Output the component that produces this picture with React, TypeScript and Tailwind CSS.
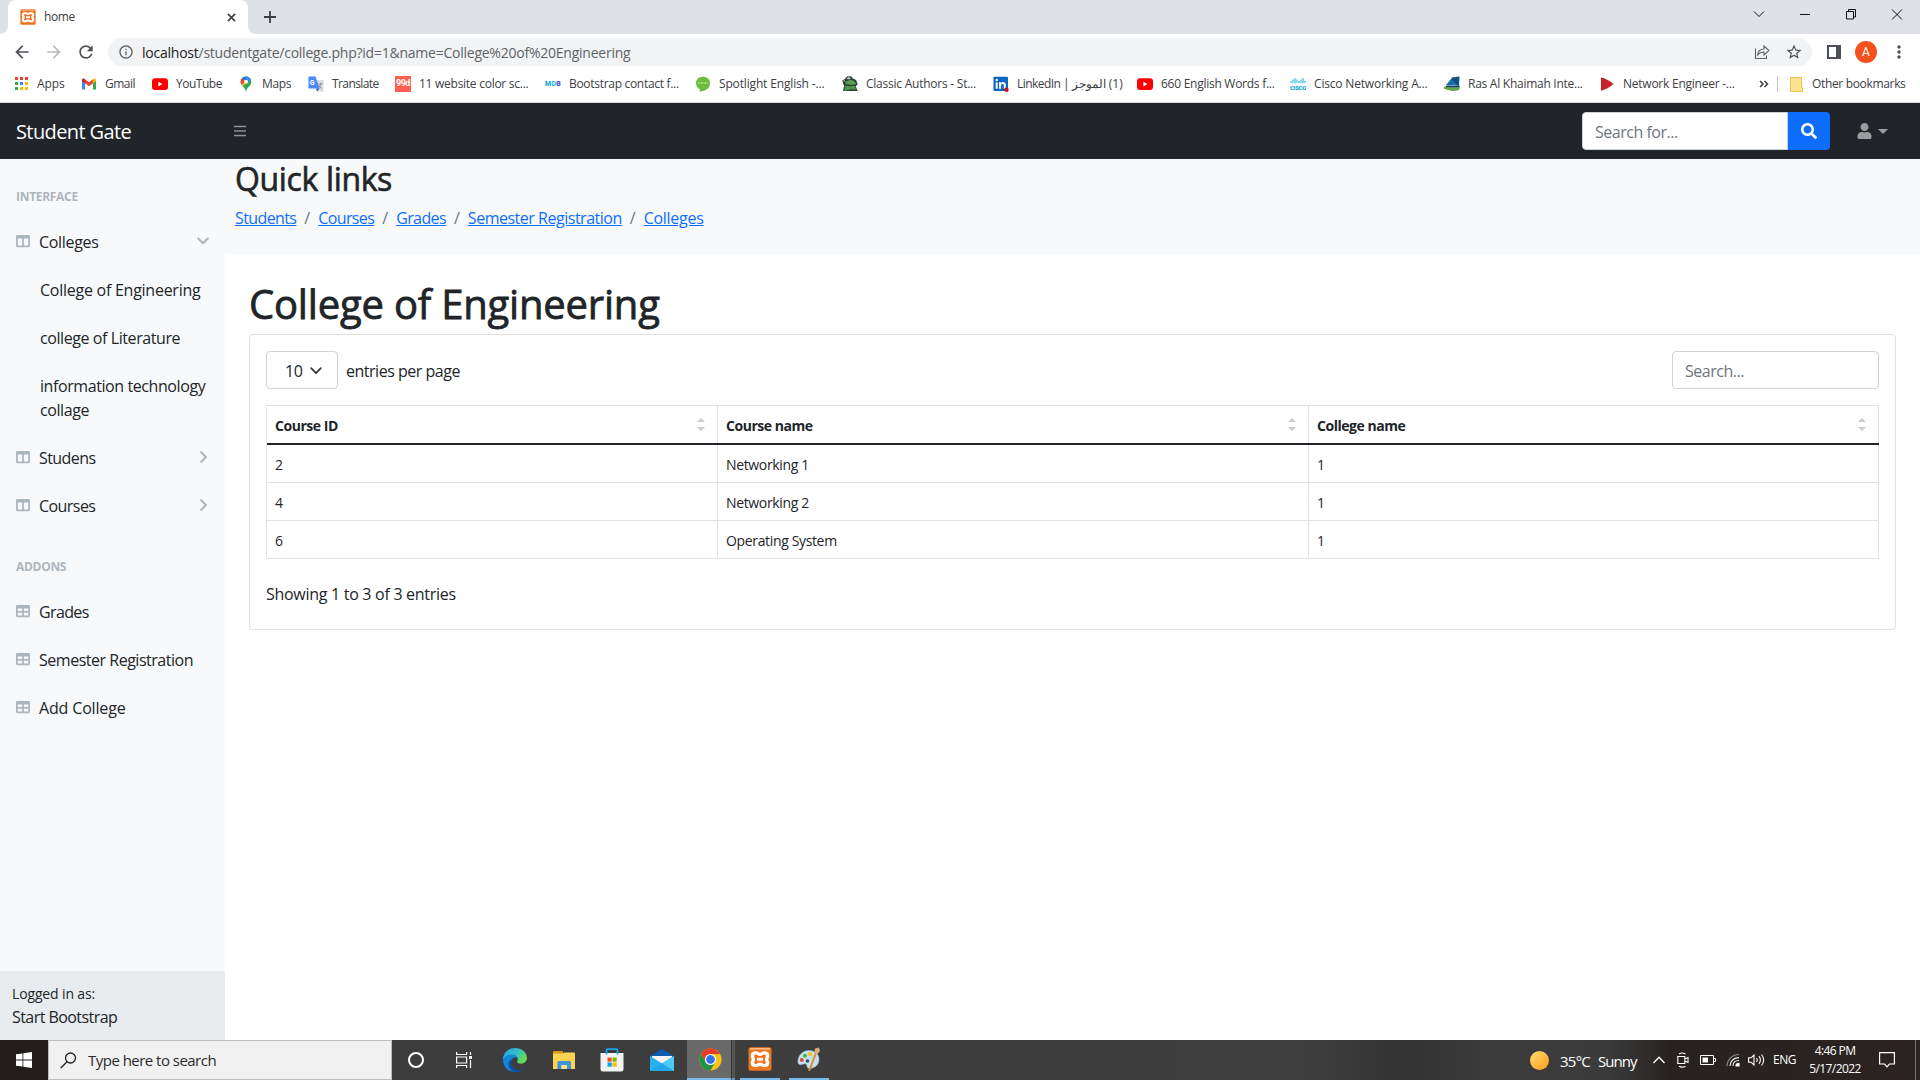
import React from "react";
import { FaColumns, FaTable, FaUser, FaSearch } from "react-icons/fa";
import { MdRefresh, MdArrowBack, MdArrowForward, MdInfoOutline, MdStarBorder, MdMoreVert } from "react-icons/md";

const YouTubeIcon = () => (
  <svg viewBox="0 0 16 16" className="size-4">
    <rect x="0" y="2.3" width="16" height="11.6" rx="3" fill="#f00" />
    <path d="M6.4 5.8 10.4 8.1 6.4 10.4z" fill="#fff" />
  </svg>
);

const XamppIcon = ({ className }: { className: string }) => (
  <svg viewBox="0 0 24 24" className={className}>
    <rect x="0.5" y="0.3" width="23" height="23.4" rx="2" fill="#ee7420" />
    <rect x="2" y="1" width="20" height="1.6" fill="#f7b98a" />
    <g transform="translate(12 12.3) scale(1.14 1.06) translate(-12 -12.2)" fill="none" stroke="#fff">
      <path
        d="M8.3 6.2c2 0 2.2 1.500 3.700 1.500s1.700-1.500 3.700-1.500 3 1.300 3 2.900c0 1.700-1 2-1 3.100s1 1.400 1 3.100c0 1.600-1 2.900-3 2.900s-2.200-1.500-3.700-1.500-1.700 1.500-3.700 1.500-3-1.300-3-2.900c0-1.700 1-2 1-3.100s-1-1.400-1-3.100c0-1.600 1-2.900 3-2.900z"
        strokeWidth="3"
      />
      <path d="M9.500 12.200h5" strokeWidth="2.800" />
    </g>
  </svg>
);

const AppsIcon = () => (
  <svg viewBox="0 0 16 16" className="size-4">
    {["#ea4335", "#ea4335", "#ea4335", "#34a853", "#4285f4", "#fbbc04", "#34a853", "#fbbc04", "#fbbc04"].map((c, i) => (
      <rect key={i} x={2 + (i % 3) * 5} y={1 + Math.floor(i / 3) * 5} width="3" height="3" fill={c} />
    ))}
  </svg>
);

const GmailIcon = () => (
  <svg viewBox="0 0 16 16" className="size-4">
    <path d="M1 4v9.500h3V7z" fill="#4285f4" />
    <path d="M15 4v9.500h-3V7z" fill="#34a853" />
    <path d="M4 3.200 8 6.300l4-3.100v4L8 10.300 4 7.200z" fill="#ea4335" />
    <path d="M1 4c0-1.700 1.800-2 3-.8v4L1 5z" fill="#c5221f" />
    <path d="M15 4c0-1.700-1.800-2-3-.8v4L15 5z" fill="#fbbc04" />
  </svg>
);

const MapsIcon = () => (
  <svg viewBox="0 0 16 16" className="size-4">
    <path d="M8 .5a5.300 5.300 0 0 0-5.300 5.300C2.700 9.800 7 11 8 15.800 9 11 13.300 9.800 13.300 5.800A5.300 5.300 0 0 0 8 .5z" fill="#34a853" />
    <path d="M8 .5a5.300 5.300 0 0 0-4 1.800L8 5.800 11.700 2A5.300 5.300 0 0 0 8 .5z" fill="#1a73e8" />
    <path d="M4 2.300a5.300 5.300 0 0 0-.4 6.300L8 5.800z" fill="#ea4335" />
    <path d="M3.600 8.600 5 10.300 10 4.500 8 5z" fill="#fbbc04" />
    <path d="M8 .5a5.300 5.300 0 0 1 5 3.500L9 7 8 4z" fill="#4285f4" />
    <circle cx="8" cy="5.800" r="2" fill="#fff" />
  </svg>
);

const TranslateIcon = () => (
  <svg viewBox="0 0 16 16" className="size-4">
    <path d="M6 4h9.500v11.500H9.500z" fill="#dadce0" />
    <path d="M10.500 8h4M12.500 7v1.200c-.2 2-1 3-2.200 4M11 9.500c.6 1.500 1.500 2.200 3 2.800" stroke="#7b8aa3" strokeWidth=".9" fill="none" />
    <path d="M8 12.500h3.500L9 15.500z" fill="#1c4fc0" />
    <path d="M.5.500h7L11.500 12.500H.5z" fill="#4a8af4" />
    <text x="1.700" y="9.200" fontSize="7" fontWeight="700" fill="#fff" fontFamily="Roboto">G</text>
  </svg>
);

const NinetyNineIcon = () => (
  <span className="flex size-4 items-center justify-center bg-[#fe5f50] font-[Roboto] text-[9px] font-bold tracking-[-0.5px] text-white">99d</span>
);

const MdbIcon = () => (
  <span className="flex w-4 justify-center font-[Roboto] text-[7px] leading-4 font-black tracking-[0.2px]">
    <span className="text-[#1ba8e0]">M</span>
    <span className="text-[#2bbbe8]">D</span>
    <span className="text-[#4d5cc5]">B</span>
  </span>
);

const SpotlightIcon = () => (
  <svg viewBox="0 0 16 16" className="size-4">
    <path d="M8 .7c4 0 7 2.800 7 6.300 0 4.800-3 7.500-10.500 8.700L5 13.200C2.500 12.200 1 10 1 7 1 3.500 4 .7 8 .7z" fill="#6cbd3c" />
    <path d="M3 7h10" stroke="#b9e29d" strokeWidth="1.600" strokeDasharray="1 .4" />
  </svg>
);

const FrogIcon = () => (
  <svg viewBox="0 0 16 16" className="size-4">
    <path d="M.3 4.500 3 3l2-2.500 4-.3 2 2.300 3 1.500 1.700 4-2 2.500 2 4.500H1L2.200 10 1 7z" fill="#2e3d33" />
    <path d="M3 5.500 6 5l2-1.500 4 1.500 2.500 3-4.500 1L4 8z" fill="#58a058" />
    <path d="M3 9.500 8 10.300l5-.5 1 4-5-.5L2.500 15z" fill="#4b9650" />
    <path d="M4.500 2.500 7 1l2 1.500-3 1zM1 5l2-1v1.500z" fill="#c8d0c8" />
  </svg>
);

const LinkedInIcon = () => (
  <svg viewBox="0 0 16 16" className="size-4">
    <rect x=".5" y=".8" width="14.500" height="14.200" rx="1" fill="#0a66c2" />
    <path d="M2.700 6.200h2v6.500h-2zM6 6.200h2v1c.8-1.600 4.800-1.900 4.800 1.800v3.700h-2V9.500c0-2.200-2.700-2-2.700 0v3.200H6z" fill="#fff" />
    <circle cx="3.700" cy="4" r="1.200" fill="#fff" />
    <circle cx="13.500" cy="13.700" r="2.200" fill="#cc1016" />
  </svg>
);

const CiscoIcon = () => (
  <svg viewBox="0 0 16 16" className="size-4">
    <path d="M1 5v2M3 3.500V7M5 2v5.500M7 3.500V7M9 5v2M11 3.500V7M13 2v5.500M15 5v2" stroke="#1bb0e0" strokeWidth="1" />
    <text x="0" y="14.200" fontSize="6" fontWeight="900" textLength="16" lengthAdjust="spacingAndGlyphs" fill="#049fd9" fontFamily="Roboto">CISCO</text>
  </svg>
);

const RasIcon = () => (
  <svg viewBox="0 0 16 16" className="size-4">
    <path d="M8 1.500 15.500.5 15 9.500 4 9z" fill="#0d4f86" />
    <path d="M7 3 2 9l12 .5z" fill="#1b6da8" />
    <path d="M0 11c5-1.500 10 2 15.500-.5v3C10 16.500 4 14 0 12.800z" fill="#5fa343" />
    <path d="M2 10.500c5-1 9 1.500 13.500-.5" stroke="#123f6b" strokeWidth="1.500" fill="none" />
  </svg>
);

const PlayIcon = () => (
  <svg viewBox="0 0 16 16" className="size-4">
    <path d="M2 1.500Q7 2 14.500 8 8 13.500 2 14.700z" fill="#c92228" />
  </svg>
);

const bookmarks: { label: React.ReactNode; icon: React.ReactNode; className: string }[] = [
  { label: "Apps", icon: <AppsIcon />, className: "w-[68px] tracking-[-0.01em]" },
  { label: "Gmail", icon: <GmailIcon />, className: "w-[71px] tracking-[-0.04em]" },
  { label: "YouTube", icon: <YouTubeIcon />, className: "w-[86px] tracking-[-0.04em]" },
  { label: "Maps", icon: <MapsIcon />, className: "w-[70px] tracking-[-0.03em]" },
  { label: "Translate", icon: <TranslateIcon />, className: "w-[87px] tracking-[-0.05em]" },
  { label: "11 website color sc...", icon: <NinetyNineIcon />, className: "w-[150px] tracking-[-0.022em]" },
  { label: "Bootstrap contact f...", icon: <MdbIcon />, className: "w-[150px] tracking-[-0.025em]" },
  { label: "Spotlight English -...", icon: <SpotlightIcon />, className: "w-[147px] tracking-[-0.013em]" },
  { label: "Classic Authors - St...", icon: <FrogIcon />, className: "w-[151px] tracking-[-0.02em]" },
  { label: <>LinkedIn | <bdi>الموجز</bdi> (1)</>, icon: <LinkedInIcon />, className: "w-[144px] tracking-[-0.045em]" },
  { label: "660 English Words f...", icon: <YouTubeIcon />, className: "w-[153px] tracking-[-0.022em]" },
  { label: "Cisco Networking A...", icon: <CiscoIcon />, className: "w-[154px] tracking-[-0.015em]" },
  { label: "Ras Al Khaimah Inte...", icon: <RasIcon />, className: "w-[155px] tracking-[-0.022em]" },
  { label: "Network Engineer -...", icon: <PlayIcon />, className: "w-[160px] tracking-[-0.02em]" },
];

function BrowserChrome() {
  return (
    <header className="h-[103px] shrink-0 border-b border-[#d4d6d9] bg-white text-[12px] text-[#3c4043]">
      <div className="flex h-[34px] bg-[#dee1e6]">
        <div className="flex w-2 items-end bg-white">
          <div className="h-full w-2 rounded-br-lg bg-[#dee1e6]" />
        </div>
        <div className="flex bg-[#dee1e6]">
          <div className="flex w-60 items-center rounded-t-lg bg-white pr-[11px] pl-3">
            <XamppIcon className="size-4" />
            <span className="ml-2 flex-1 tracking-[-0.03em]">home</span>
            <svg viewBox="0 0 10 10" className="mr-px size-[9px]" stroke="#3c4043" strokeWidth="1.800">
              <path d="M1 1 9 9M9 1 1 9" />
            </svg>
          </div>
        </div>
        <div className="flex w-2 bg-white">
          <div className="h-full w-2 rounded-bl-lg bg-[#dee1e6]" />
        </div>
        <svg viewBox="0 0 12 12" className="mt-[11px] ml-2 size-3" stroke="#3c4043" strokeWidth="1.800">
          <path d="M6 0v12M0 6h12" />
        </svg>
        <svg viewBox="0 0 167 14" className="mt-[7px] ml-auto h-[14px] w-[167px]" fill="none" stroke="#111" strokeWidth="1">
          <path d="M1 4.500 6 9.500 11 4.500M47 7.500h10M93.500 4.500h7v7.500h-7zM95.500 4.500v-2h7v7.500h-2M139 2.500l10 10M149 2.500l-10 10" />
        </svg>
      </div>

      <div className="flex h-9 items-center">
        <div className="flex w-[108px] items-center pl-[12px]">
          <MdArrowBack className="size-5 text-[#4d5156]" />
          <MdArrowForward className="ml-3 size-5 text-[#b9bbbe]" />
          <MdRefresh className="ml-3 size-5 text-[#4d5156]" />
        </div>
        <div className="flex h-7 w-[1704px] items-center rounded-full bg-[#f1f3f4] pr-[9px] pl-[10px]">
          <MdInfoOutline className="size-4 text-[#5f6368]" />
          <span className="ml-2 text-[14px] tracking-[-0.017em] text-[#5f6368]">
            <span className="text-[#202124]">localhost</span>/studentgate/college.php?id=1&amp;name=College%20of%20Engineering
          </span>
          <svg viewBox="0 0 16 16" className="mr-[15px] ml-auto size-4" fill="none" stroke="#5f6368" strokeWidth="1.100">
            <path d="M1.500 4.500v10h11v-3M3.500 11c.5-4 3-6 6.500-6V2l5 4.500-5 4.500V8C7 8 5 9 3.500 11z" />
          </svg>
          <MdStarBorder className="size-[18px] text-[#4d5156]" />
        </div>
        <svg viewBox="0 0 16 14" className="ml-[14px] h-[14px] w-4">
          <path d="M2 1h12v12H2z" fill="none" stroke="#4d5156" strokeWidth="2" />
          <path d="M10 1h5v12h-5z" fill="#4d5156" />
        </svg>
        <div className="ml-[13px] flex size-[22px] items-center justify-center rounded-full bg-[#f4511e] font-[Roboto] text-[12px] text-white">A</div>
        <MdMoreVert className="ml-[12px] size-[20px] text-[#4d5156]" />
      </div>

      <div className="flex h-7 items-center pl-[13px]">
        {bookmarks.map((b, i) => (
          <div key={i} className={`flex shrink-0 items-center gap-2 ${b.className}`}>
            {b.icon}
            <span className="text-[12px] whitespace-nowrap">{b.label}</span>
          </div>
        ))}
        <svg viewBox="0 0 10 8" className="h-2 w-[10px] shrink-0" fill="none" stroke="#3c4043" strokeWidth="1.500">
          <path d="M1 1 4 4 1 7M5.500 1 8.500 4 5.500 7" />
        </svg>
        <div className="ml-[8px] h-4 w-px shrink-0 bg-[#c4c7ca]" />
        <svg viewBox="0 0 13 15" className="ml-3 h-[15px] w-[13px] shrink-0">
          <path d="M.5.500h11v10h1v4H.5z" fill="#fde293" stroke="#e9c64a" />
        </svg>
        <span className="ml-[9px] text-[12px] tracking-[-0.028em] whitespace-nowrap">Other bookmarks</span>
      </div>
    </header>
  );
}

function NavBar() {
  return (
    <nav className="flex h-14 shrink-0 items-center bg-[#212529]">
      <span className="w-[234px] pt-0.5 pl-4 text-[20px] tracking-[-0.03em] text-white">Student Gate</span>
      <svg viewBox="0 0 12 12" className="size-3" stroke="#8f9193" strokeWidth="1.300">
        <path d="M0 1.500h12M0 6h12M0 10.500h12" />
      </svg>
      <div className="ml-auto flex h-[38px] w-[248px]">
        <div className="flex w-[206px] items-center rounded-l border border-[#ced4da] bg-white pt-px pl-3 text-[16px] tracking-[-0.03em] text-[#6c757d]">Search for...</div>
        <div className="flex flex-1 items-center justify-center rounded-r bg-[#0d6efd]">
          <FaSearch className="size-4 text-white" />
        </div>
      </div>
      <div className="ml-[27px] flex w-[63px] items-center">
        <FaUser className="h-4 w-[15px] text-[#9b9d9f]" />
        <div className="ml-[6px] border-x-[5px] border-t-[5px] border-x-transparent border-t-[#9b9d9f]" />
      </div>
    </nav>
  );
}

function SideHeading({ children }: { children: React.ReactNode }) {
  return <div className="px-4 pt-[29px] pb-[11px] text-[12px] leading-[18px] font-bold tracking-[-0.025em] text-[#adb5bd]">{children}</div>;
}

function SideLink({ label, kind, arrow, className }: { label: string; kind: "columns" | "table"; arrow?: "down" | "right"; className: string }) {
  const Icon = kind === "columns" ? FaColumns : FaTable;
  return (
    <div className={`flex h-12 items-center px-4 ${className}`}>
      <Icon className="size-[14px] text-[#adb5bd]" />
      <span className="ml-[9px] flex-1 pt-px">{label}</span>
      {arrow && (
        <svg viewBox="0 0 12 12" className="size-3" fill="none" stroke="#adb5bd" strokeWidth="2.100" strokeLinecap="round" strokeLinejoin="round">
          <path d={arrow === "down" ? "M1.200 3.500 6 8.300 10.800 3.500" : "M4.200 1.200 9 6 4.200 10.800"} />
        </svg>
      )}
    </div>
  );
}

function Sidebar() {
  return (
    <aside className="flex w-[225px] shrink-0 flex-col bg-[#f8f9fa] text-[16px] leading-6">
      <SideHeading>INTERFACE</SideHeading>
      <SideLink label="Colleges" kind="columns" arrow="down" className="tracking-[-0.02em]" />
      <div className="pl-10">
        <div className="pt-[13px] pb-[11px] tracking-[-0.016em]">College of Engineering</div>
        <div className="pt-[13px] pb-[11px] tracking-[-0.026em]">college of Literature</div>
        <div className="pt-[13px] pb-[11px] tracking-[-0.026em]">
          information technology
          <br />
          collage
        </div>
      </div>
      <SideLink label="Studens" kind="columns" arrow="right" className="tracking-[-0.035em]" />
      <SideLink label="Courses" kind="columns" arrow="right" className="tracking-[-0.035em]" />
      <SideHeading>ADDONS</SideHeading>
      <SideLink label="Grades" kind="table" className="tracking-[-0.04em]" />
      <SideLink label="Semester Registration" kind="table" className="tracking-[-0.03em]" />
      <SideLink label="Add College" kind="table" className="tracking-[-0.01em]" />
      <div className="mt-auto h-[69px] bg-[#e9ecef] p-3">
        <div className="text-[14px] leading-[21px] tracking-[-0.01em]">Logged in as:</div>
        <div className="pt-px tracking-[-0.035em]">Start Bootstrap</div>
      </div>
    </aside>
  );
}

const crumbs = [
  { label: "Students", className: "tracking-[-0.038em]" },
  { label: "Courses", className: "tracking-[-0.038em]" },
  { label: "Grades", className: "tracking-[-0.038em]" },
  { label: "Semester Registration", className: "tracking-[-0.03em]" },
  { label: "Colleges", className: "tracking-[-0.018em]" },
];
const headers = ["Course ID", "Course name", "College name"];
const rows = [
  ["2", "Networking 1", "1"],
  ["4", "Networking 2", "1"],
  ["6", "Operating System", "1"],
];

function Main() {
  return (
    <main className="flex-1">
      <div className="h-[95px] bg-[#f8f9fa] pt-px pl-[10px]">
        <h2 className="text-[32px] leading-[38px] font-medium tracking-[-0.011em] [-webkit-text-stroke:0.6px_#212529]">Quick links</h2>
        <div className="mt-2 flex text-[16px] leading-6">
          {crumbs.map((c, i) => (
            <React.Fragment key={c.label}>
              {i > 0 && <span className="px-2 text-[#6c757d]">/</span>}
              <a className={`text-[#0d6efd] underline ${c.className}`}>{c.label}</a>
            </React.Fragment>
          ))}
        </div>
      </div>
      <div className="px-6 pt-[26px]">
        <h1 className="text-[40px] leading-[48px] font-medium tracking-[-0.005em] [-webkit-text-stroke:0.8px_#212529]">College of Engineering</h1>
        <div className="mt-[6px] h-[296px] rounded border border-[#dfdfdf] p-4">
          <div className="flex h-[38px] items-center text-[16px] tracking-[-0.03em]">
            <div className="flex h-full w-[72px] items-center rounded border border-[#ced4da] pt-px pl-[18px]">
              10
              <svg viewBox="0 0 12 8" className="ml-2 h-2 w-3" fill="none" stroke="#343a40" strokeWidth="1.800" strokeLinecap="round" strokeLinejoin="round">
                <path d="M1.200 1.200 6 6.200 10.800 1.200" />
              </svg>
            </div>
            <span className="ml-2 pt-px">entries per page</span>
            <div className="ml-auto flex h-full w-[207px] items-center rounded border border-[#ced4da] pt-px pl-3 text-[#6c757d]">Search...</div>
          </div>
          <div className="mt-4 border-t border-l border-[#dee2e6] text-[14px]">
            <div className="grid h-[39px] grid-cols-[451px_591px_1fr] border-b-2 border-[#212529] font-bold tracking-[-0.033em]">
              {headers.map((h) => (
                <div key={h} className="flex items-center justify-between border-r border-[#dee2e6] pt-px pr-3 pl-2">
                  {h}
                  <svg viewBox="0 0 8 13" className="mb-px h-[13px] w-2" fill="#ccc">
                    <path d="M0 4 4 0l4 4zM0 9h8l-4 4z" />
                  </svg>
                </div>
              ))}
            </div>
            {rows.map((r) => (
              <div key={r[0]} className="grid h-[38px] grid-cols-[451px_591px_1fr] border-b border-[#dee2e6] tracking-[-0.025em]">
                {r.map((c, i) => (
                  <div key={i} className="flex items-center border-r border-[#dee2e6] pt-px pl-2">{c}</div>
                ))}
              </div>
            ))}
          </div>
          <div className="mt-[23px] text-[16px] leading-6 tracking-[-0.018em]">Showing 1 to 3 of 3 entries</div>
        </div>
      </div>
    </main>
  );
}

const EdgeIcon = () => (
  <svg viewBox="0 0 24 24" className="size-6">
    <defs>
      <linearGradient id="edgeTop" x1="0" x2="1" y1="0" y2=".5">
        <stop offset="0" stopColor="#2a9fe0" />
        <stop offset=".6" stopColor="#35c1c9" />
        <stop offset="1" stopColor="#66dd4c" />
      </linearGradient>
    </defs>
    <path d="M0 12C0 5 5.500 0 12 0c7 0 12 4.700 12 10 0 3.500-3 5.700-6 5.700-3.500 0-4.500-1.500-3.500-3C15.500 9 13 7 9 7 4.500 7 1.500 9.500 0 12z" fill="url(#edgeTop)" />
    <path d="M0 12c1.300-3 4.600-5.500 8.500-5.500S14.500 8.600 14.500 10C11 8 8 11 8 14.500c0 5 5 8.500 10 8-2 1-4 1.500-6 1.500C5 24 0 18.500 0 12z" fill="#1385d8" />
    <path d="M9.800 11.500C7 14 8 19 12 21c4 2 8 .5 10.500-2.800C20 22.500 16.500 24 13.500 24 8 24 5 19 5.500 15.500c.4-2.500 2-4 4.300-4z" fill="#0c50a0" />
  </svg>
);

const FolderIcon = () => (
  <svg viewBox="0 0 22 18" className="h-[18px] w-[22px]">
    <path d="M0 1q0-1 1-1h8q1 0 1 1v3H0z" fill="#dd9a0a" />
    <path d="M0 2.500h10L11 1.500h10q1 0 1 1V18H0z" fill="#fcd254" />
    <path d="M4.500 18v-6.500q0-1.500 1.500-1.500h10.500q1.500 0 1.500 1.500V18h-4v-4H8.500v4z" fill="#3f92d6" />
    <path d="M8.500 14h5.500v4H8.500z" fill="#fbe091" />
  </svg>
);

const StoreIcon = () => (
  <svg viewBox="0 0 24 24" className="size-6">
    <path d="M.5 5h23v16q0 2.500-2.500 2.500H3Q.5 23.500.5 21z" fill="#f3f3f3" />
    <path d="M6.500 6.500V2q0-.8.800-.8h9.400q.8 0 .8.800v4.500" fill="none" stroke="#1ba5ea" strokeWidth="1.800" />
    <path d="M7.500 9.500h4.200v4.200H7.500z" fill="#f25022" />
    <path d="M12.500 9.500h4.200v4.200h-4.200z" fill="#7fba00" />
    <path d="M7.500 14.500h4.200v4.200H7.500z" fill="#00a4ef" />
    <path d="M12.500 14.500h4.200v4.200h-4.200z" fill="#ffb900" />
  </svg>
);

const MailIcon = () => (
  <svg viewBox="0 0 24 22" className="h-[22px] w-6">
    <path d="M0 7 12 0l12 7v8H0z" fill="#0c5fb0" />
    <path d="M2 7h20v7H2z" fill="#f4f4f4" />
    <path d="M0 7l12 7.500L24 7v15H0z" fill="#27b0ee" />
    <path d="M12 14.500 24 7v15z" fill="#4cc9f5" />
    <path d="M12 14.500 24 22H0z" fill="#1c8fdd" fillOpacity=".3" />
  </svg>
);

const ChromeIcon = () => (
  <svg viewBox="0 0 24 24" className="size-[23px]">
    <circle cx="12" cy="12" r="11.500" fill="#fbc116" />
    <path d="M2.040 6.250A11.500 11.500 0 0 1 21.960 6.250H12L7 14.800z" fill="#e33b2e" />
    <path d="M2.040 6.250A11.500 11.500 0 0 0 12 23.500l5-8.600-10 0z" fill="#229342" />
    <circle cx="12" cy="12" r="5.800" fill="#fff" />
    <circle cx="12" cy="12" r="4.600" fill="#2f74e8" />
  </svg>
);

const PaintIcon = () => (
  <svg viewBox="0 0 24 24" className="size-6">
    <path d="M12 3.500c6 0 10 3.500 10 9 0 5.500-4.500 9-10 9-2.500 0-1.500-3.500-3-4.500-2-1-4.500 1.500-6.500.5C.5 16.500.5 14 1.500 11 3 6.500 7 3.500 12 3.500z" fill="#c6e2f2" stroke="#8db8d2" strokeWidth=".6" />
    <circle cx="4.800" cy="13" r="2" fill="#e0443a" />
    <circle cx="8" cy="8.800" r="2" fill="#4fae3c" />
    <circle cx="13" cy="7" r="2.200" fill="#f2c02c" />
    <circle cx="10.500" cy="14" r="1.800" fill="#2c4c66" />
    <path d="M19 6 12 24" stroke="#e38b2c" strokeWidth="2" />
    <path d="M18 1.500 22 .5 23 4 20 7.500 17.500 6z" fill="#d9ad78" />
  </svg>
);

function Task({ children, className }: { children: React.ReactNode; className: string }) {
  return <div className={`flex h-full shrink-0 items-center justify-center ${className}`}>{children}</div>;
}

function Taskbar() {
  return (
    <footer className="flex h-10 shrink-0 bg-[linear-gradient(90deg,#3b3b3c_0,#3f3f40_1300px,#333_1400px,#3c3c3d_1500px,#3a3a3b_1610px,#272220_1670px,#2a2321_1920px)] text-white">
      <Task className="w-12 bg-[#221d1a]">
        <svg viewBox="0 0 16 16" className="size-4" fill="#fff">
          <path d="M0 2.300 6.500 1.400v6.200H0zM7.300 1.300 16 0v7.600H7.300zM0 8.400h6.500v6.200L0 13.700zM7.300 8.400H16V16l-8.700-1.300z" />
        </svg>
      </Task>
      <div className="flex w-[344px] items-center border border-[#bdbdbd] bg-[#f1f1f1] pl-[11px] text-[15px] text-[#2b2b2b]">
        <svg viewBox="0 0 17 17" className="size-[17px]" fill="none" stroke="#222" strokeWidth="1.300">
          <circle cx="10.500" cy="6" r="5" />
          <path d="M7 9.800.8 16" />
        </svg>
        <span className="ml-[11px] tracking-[-0.035em]">Type here to search</span>
      </div>
      <Task className="w-12">
        <div className="-ml-px size-4 rounded-full border-2 border-white" />
      </Task>
      <Task className="w-[47px]">
        <svg viewBox="0 0 16 16" className="size-4" fill="none" stroke="#fff" strokeWidth="1.200">
          <path d="M.6 0v2.500h10V0M.6 5h10v6h-10zM.6 16v-2.500h10V16M14.500 0v3M14.500 8v8" />
          <path d="M13 4h3v3h-3z" fill="#fff" stroke="none" />
        </svg>
      </Task>
      <Task className="ml-1 w-12"><EdgeIcon /></Task>
      <Task className="w-[49px]"><FolderIcon /></Task>
      <Task className="w-12"><StoreIcon /></Task>
      <Task className="w-[51px]"><MailIcon /></Task>
      <Task className="w-11 border-b-2 border-[#76b9ed] bg-[#6a6a6b] pl-[3px]"><ChromeIcon /></Task>
      <Task className="w-1 border-b-2 border-l border-b-[#5f97c4] border-l-[#333] bg-[#555]">{null}</Task>
      <Task className="ml-[5px] w-10 border-b-2 border-[#76b9ed]"><XamppIcon className="size-6" /></Task>
      <Task className="ml-[9px] w-10 border-b-2 border-[#76b9ed]"><PaintIcon /></Task>

      <div className="ml-auto flex w-[385px] items-center">
        <div className="size-[19px] rounded-full bg-linear-to-br from-[#ffdf6b] to-[#ff9a0c]" />
        <span className="ml-[11px] w-[38px] pt-0.5 text-[15px] tracking-[-0.05em]">35°C</span>
        <span className="w-[55px] pt-0.5 text-[15px] tracking-[-0.065em]">Sunny</span>
        <svg viewBox="0 0 12 8" className="h-2 w-3 shrink-0" fill="none" stroke="#fff" strokeWidth="1.300">
          <path d="M.5 7 6 1.300 11.500 7" />
        </svg>
        <svg viewBox="0 0 12 16" className="ml-3 h-4 w-3 shrink-0" fill="none" stroke="#fff" strokeWidth="1.100">
          <path d="M.8 4.500h7v7h-7zM7.800 7 11 5.500v5L7.800 9M2 2Q5 0 8.500 2M2 14.200Q5 16 8.500 14.200" />
        </svg>
        <svg viewBox="0 0 16 10" className="ml-[11px] h-[10px] w-4 shrink-0" fill="none" stroke="#fff">
          <path d="M.5.500h13v9H.5zM14 3.500h1.500v3H14" />
          <path d="M2.500 2.500h5.500v5H2.500z" fill="#fff" stroke="none" />
        </svg>
        <svg viewBox="0 0 14 14" className="ml-[10px] size-[14px] shrink-0" fill="none" strokeWidth="1.200">
          <path d="M1 13C1 6.500 6.500 1.500 13 1.500" stroke="#888" />
          <path d="M4 13c0-5 4-8.300 9-8.300M7 13c0-3.500 2.500-5.500 6-5.500" stroke="#eee" />
          <path d="M10 13c0-1.500 1.300-2.600 3-2.600V13z" fill="#fff" stroke="#fff" />
        </svg>
        <svg viewBox="0 0 17 14" className="ml-2 h-[14px] w-[17px] shrink-0" fill="none" stroke="#fff" strokeWidth="1.100">
          <path d="M.6 4.800h2.500L6 2v10L3.100 9.200H.6zM8.500 5q1.500 2 0 4M11 3.200q2.800 3.800 0 7.600M13.500 1.500q4.300 5.500 0 11" />
        </svg>
        <span className="ml-[8px] w-[26px] text-[12px] tracking-[-0.035em]">ENG</span>
        <div className="ml-[9px] w-[54px] text-center text-[12px] leading-[18px] tracking-[-0.05em] whitespace-nowrap">
          4:46 PM
          <br />
          5/17/2022
        </div>
        <svg viewBox="0 0 16 16" className="ml-[17px] size-4 shrink-0" fill="none" stroke="#fff" strokeWidth="1.200">
          <path d="M.6.600h14.800v11.400h-5L8 14.800 5.600 12h-5z" />
        </svg>
      </div>
      <div className="mr-[4px] w-px bg-[#777]" />
    </footer>
  );
}

export default function App() {
  return (
    <div className="flex h-[1080px] w-[1920px] flex-col overflow-hidden bg-white font-['Open_Sans','Noto_Sans',sans-serif] text-[#212529]">
      <BrowserChrome />
      <NavBar />
      <div className="flex min-h-0 flex-1">
        <Sidebar />
        <Main />
      </div>
      <Taskbar />
    </div>
  );
}
